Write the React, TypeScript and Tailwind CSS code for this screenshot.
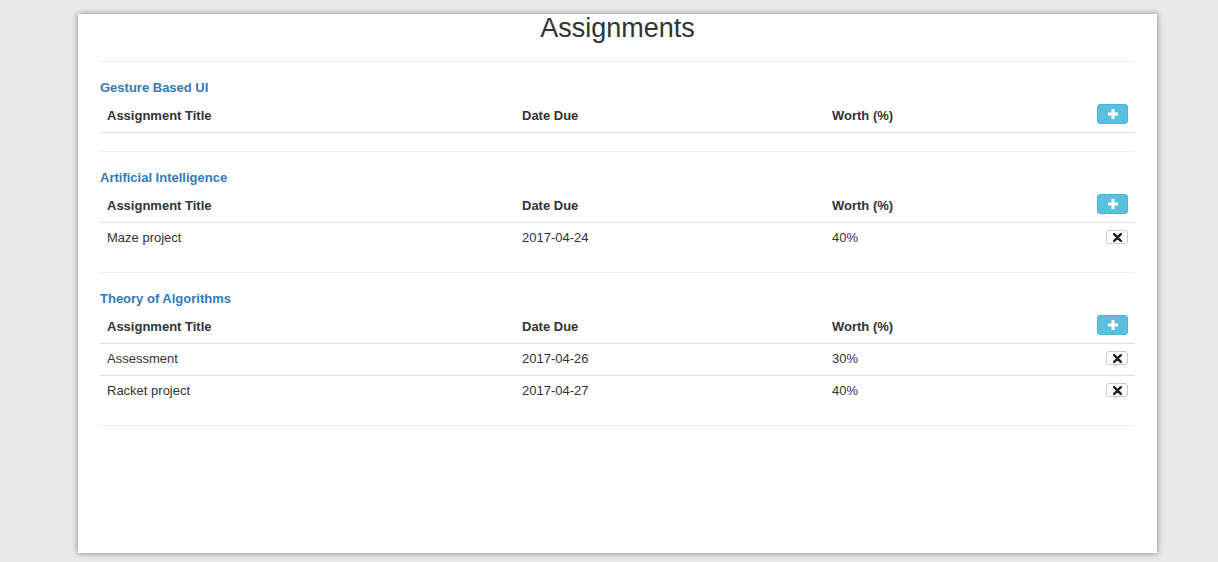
import React from "react";

type Assignment = { title: string; due: string; worth: string };
type Module = { name: string; items: Assignment[] };

const modules: Module[] = [
  { name: "Gesture Based UI", items: [] },
  {
    name: "Artificial Intelligence",
    items: [{ title: "Maze project", due: "2017-04-24", worth: "40%" }],
  },
  {
    name: "Theory of Algorithms",
    items: [
      { title: "Assessment", due: "2017-04-26", worth: "30%" },
      { title: "Racket project", due: "2017-04-27", worth: "40%" },
    ],
  },
];

function PlusIcon() {
  return (
    <svg width="10" height="10" viewBox="0 0 10 10" fill="#fff">
      <rect x="3.5" y="0" width="3" height="10" />
      <rect x="0" y="3.5" width="10" height="3" />
    </svg>
  );
}

function RemoveIcon() {
  return (
    <svg width="9" height="9" viewBox="0 0 9 9">
      <path d="M1.2 1.2 L7.8 7.8 M7.8 1.2 L1.2 7.8" stroke="#222" strokeWidth="2.5" strokeLinecap="round" />
    </svg>
  );
}

const cols = "grid grid-cols-[415px_310px_1fr_auto] items-center";

function ModuleTable({ module }: { module: Module }) {
  return (
    <section className="pt-[17px] pb-[18px] border-b border-[#eee]">
      <h4 className="h-[18px] leading-[18px] text-[13px] font-bold text-[#337ab7]">
        {module.name}
      </h4>
      <div className={`${cols} mt-[3px] h-[33px] border-b border-[#ddd] font-bold text-[#333]`}>
        <div className="px-[7px]">Assignment Title</div>
        <div className="px-[7px]">Date Due</div>
        <div className="px-[7px]">Worth (%)</div>
        <div className="px-[7px] flex justify-end self-start pt-[4px]">
          <button className="flex h-5 w-[31px] items-center justify-center rounded-[3px] bg-[#5bc0de] border border-[#46b8da]">
            <PlusIcon />
          </button>
        </div>
      </div>
      {module.items.map((a, i) => (
        <div
          key={a.title}
          className={`${cols} text-[#333] ${i > 0 ? "h-[32px] border-t border-[#ddd]" : "h-[31px]"}`}
        >
          <div className="px-[7px] pb-[2px]">{a.title}</div>
          <div className="px-[7px] pb-[2px]">{a.due}</div>
          <div className="px-[7px] pb-[2px]">{a.worth}</div>
          <div className="px-[7px] flex justify-end self-start pt-[7px]">
            <button className="flex h-[14px] w-[22px] items-center justify-center rounded-[3px] border border-[#ccc] bg-white">
              <RemoveIcon />
            </button>
          </div>
        </div>
      ))}
    </section>
  );
}

export default function App() {
  return (
    <div
      className="min-h-screen h-[562px] bg-[#e9e9e9] pt-[14px] text-[13px]"
      style={{ fontFamily: '"Liberation Sans", Arial, sans-serif' }}
    >
      <div className="ml-[78px] w-[1079px] h-[539px] bg-white shadow-[0_0_6px_rgba(0,0,0,0.45)] px-[22px]">
        <h1 className="h-[28px] leading-[28px] text-center text-[27px] text-[#333]">Assignments</h1>
        <div className="mt-[19px] border-b border-[#eee]" />
        {modules.map((m) => (
          <ModuleTable key={m.name} module={m} />
        ))}
      </div>
    </div>
  );
}
